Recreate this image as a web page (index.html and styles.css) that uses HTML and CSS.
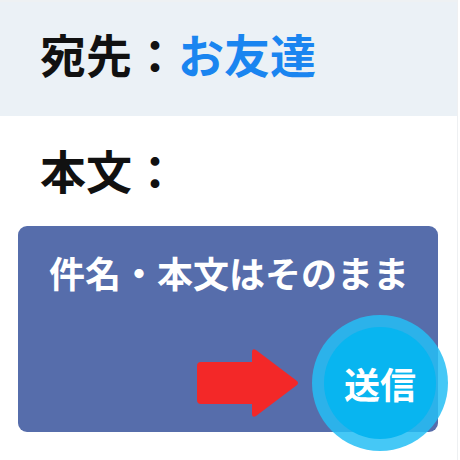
FILE: index.html
```html
<!DOCTYPE html>
<html lang="ja">
<head>
<meta charset="utf-8">
<link rel="stylesheet" href="styles.css">
</head>
<body>
<div class="page">
  <div class="to-bar">
    <span class="label">宛先：</span><span class="to-name">お友達</span>
  </div>
  <div class="body-label">本文：</div>
  <div class="card">
    <div class="card-text">件名・本文はそのまま</div>
    <div class="card-bottom">
      <svg class="arrow" width="102" height="70" viewBox="0 0 102 70">
        <path d="M4 14 H55 V4 Q55 0 59 2 L100 33 Q102 35 100 37 L59 68 Q55 70 55 66 V56 H4 Q0 56 0 52 V18 Q0 14 4 14 Z" fill="#f32828"/>
      </svg>
    </div>
    <div class="send-ring">
      <div class="send-btn">送信</div>
    </div>
  </div>
</div>
</body>
</html>
```

FILE: styles.css
```css
html, body {
  margin: 0;
  padding: 0;
  background: #ffffff;
}
body {
  font-family: "Noto Sans CJK JP", "Noto Sans", sans-serif;
  font-weight: 700;
}
.page {
  width: 457px;
  height: 460px;
  border-right: 1px solid #eef0f2;
  overflow: hidden;
}
.to-bar {
  height: 116px;
  background: #ebf1f6;
  border-top: 2px solid #eef1f3;
  box-sizing: border-box;
  display: flex;
  align-items: center;
  padding: 0 0 12px 40px;
  font-size: 46px;
  line-height: 1;
  color: #111111;
}
.to-name {
  color: #1a85f0;
}
.body-label {
  font-size: 46px;
  line-height: 1;
  color: #111111;
  padding: 30px 0 0 40px;
  height: 76px;
  box-sizing: border-box;
}
.card {
  position: relative;
  margin: 34px 0 0 18px;
  width: 420px;
  height: 206px;
  background: #566dab;
  border-radius: 9px;
  box-sizing: border-box;
  padding-top: 28px;
}
.card-text {
  color: #ffffff;
  font-size: 36px;
  line-height: 1;
  text-align: center;
  padding-left: 2px;
}
.card-bottom {
  display: flex;
  padding: 58px 0 0 179px;
}
.arrow {
  display: block;
}
.send-ring {
  position: absolute;
  left: 294px;
  top: 89px;
  width: 136px;
  height: 136px;
  border-radius: 50%;
  background: rgba(36, 190, 244, 0.85);
  display: flex;
  align-items: center;
  justify-content: center;
}
.send-btn {
  width: 112px;
  height: 112px;
  border-radius: 50%;
  background: #08b5f0;
  color: #ffffff;
  font-size: 36px;
  line-height: 1;
  display: flex;
  align-items: center;
  justify-content: center;
}
```
